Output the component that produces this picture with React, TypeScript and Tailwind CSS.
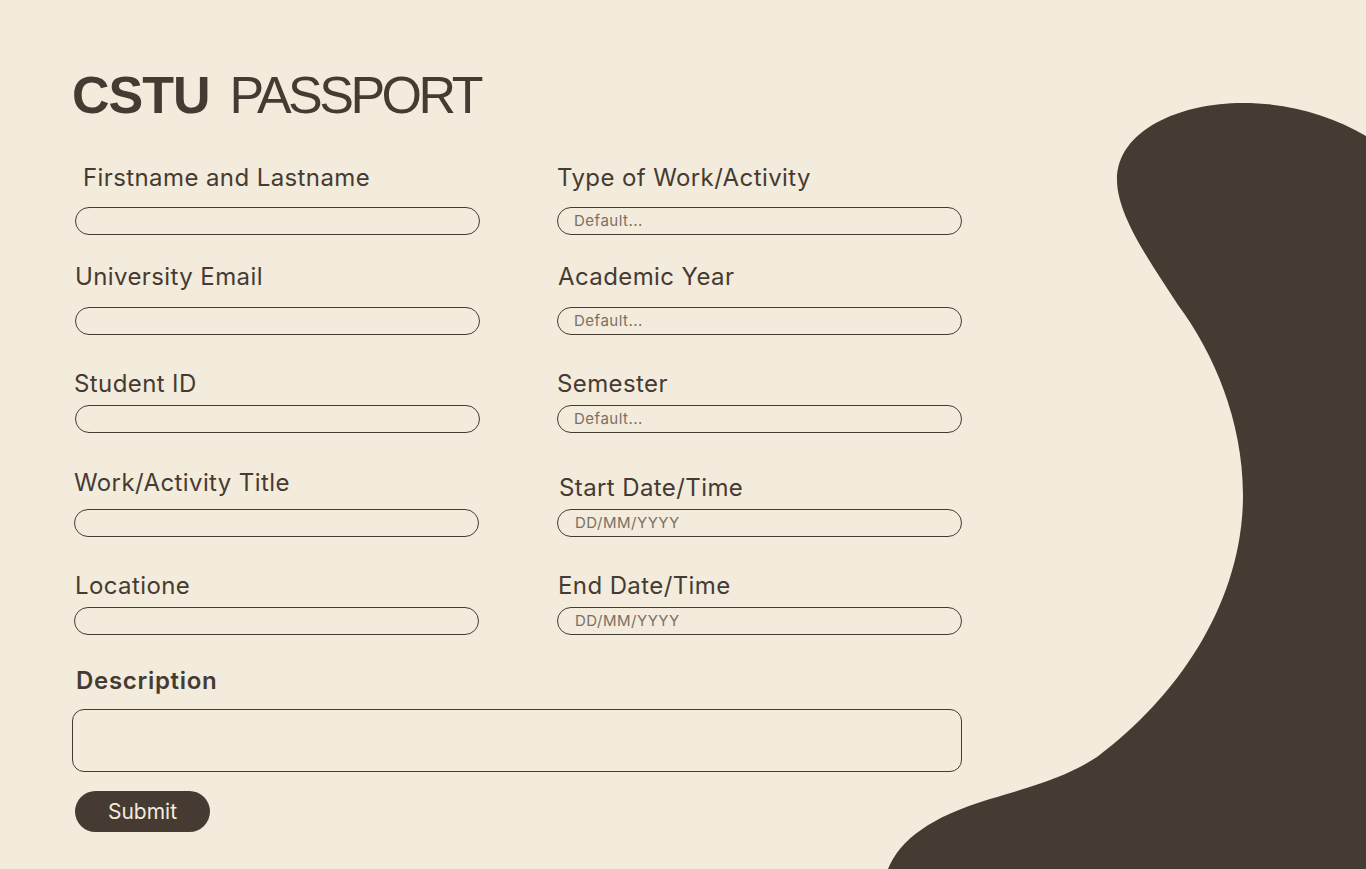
import React from "react";

const font = { fontFamily: "Inter, 'Liberation Sans', sans-serif" };

function Label({ children, className = "" }: { children: React.ReactNode; className?: string }) {
  return (
    <div className={`h-[30px] leading-[30px] text-[24px] tracking-[0.4px] text-[#463b33] whitespace-pre ${className}`}>{children}</div>
  );
}

function Input({ placeholder, className = "" }: { placeholder?: string; className?: string }) {
  return (
    <div
      className={`h-[28px] w-[405px] rounded-full border border-[#463b33] flex items-center pl-[16px] text-[15px] tracking-[0.5px] text-[#7a7067] ${className}`}
    >
      {placeholder}
    </div>
  );
}

export default function App() {
  return (
    <div className="relative w-[1366px] h-[869px] overflow-hidden bg-[#f3ebdb]" style={font}>
      <svg className="absolute inset-0" width="1366" height="869" viewBox="0 0 1366 869">
        <path
          d="M1243,103 C1180,103 1117,130 1117,180 C1117,215 1150,262 1178,305 C1213,352 1243,420 1243,495 C1243,600 1180,695 1097,757 C1068,776 1035,786 990,799 C930,817 900,840 888,869 L1366,869 L1366,136 C1330,115 1290,103 1243,103 Z"
          fill="#463b33"
        />
      </svg>

      <div className="relative pl-[72px] pt-[69px]">
        <h1
          className="flex h-[52px] leading-[52px] text-[52px] text-[#463b33] whitespace-pre"
          style={{ fontFamily: "'Liberation Sans', Arial, sans-serif" }}
        >
          <span className="font-bold tracking-[-1px]">CSTU</span>
          <span className="ml-[20px] tracking-[-3.5px]">PASSPORT</span>
        </h1>

        <div className="grid grid-cols-[405px_405px] gap-x-[77px] pl-[3px] mt-[42px]">
          {/* row 1 */}
          <div>
            <Label className="pl-[8px]">Firstname and Lastname</Label>
            <Input className="mt-[14px]" />
          </div>
          <div>
            <Label>Type of Work/Activity</Label>
            <Input className="mt-[14px]" placeholder="Default..." />
          </div>
          {/* row 2 */}
          <div className="mt-[27px]">
            <Label>University Email</Label>
            <Input className="mt-[15px]" />
          </div>
          <div className="mt-[27px]">
            <Label className="pl-[1px]">Academic Year</Label>
            <Input className="mt-[15px]" placeholder="Default..." />
          </div>
          {/* row 3 */}
          <div className="mt-[34px]">
            <Label className="-ml-[1px]">Student ID</Label>
            <Input className="mt-[6px]" />
          </div>
          <div className="mt-[34px]">
            <Label>Semester</Label>
            <Input className="mt-[6px]" placeholder="Default..." />
          </div>
          {/* row 4 */}
          <div className="mt-[35px]">
            <Label className="-ml-[1px]">Work/Activity Title</Label>
            <Input className="mt-[11px] -ml-[1px]" />
          </div>
          <div className="mt-[35px]">
            <Label className="pl-[2px] pt-[5px] h-[35px]">Start Date/Time</Label>
            <Input className="mt-[6px] pl-[17px]" placeholder="DD/MM/YYYY" />
          </div>
          {/* row 5 */}
          <div className="mt-[34px]">
            <Label>Locatione</Label>
            <Input className="mt-[6px] -ml-[1px]" />
          </div>
          <div className="mt-[34px]">
            <Label className="pl-[1px]">End Date/Time</Label>
            <Input className="mt-[6px] pl-[17px]" placeholder="DD/MM/YYYY" />
          </div>
        </div>

        <div className="mt-[31px] pl-[4px]">
          <Label className="font-semibold tracking-[0.7px]">Description</Label>
        </div>
        <div className="mt-[13px] h-[63px] w-[890px] rounded-[12px] border border-[#463b33]" />
        <button className="mt-[19px] ml-[3px] h-[41px] w-[135px] rounded-full bg-[#463b33] text-[#f3ebdb] text-[21px] flex items-center justify-center">
          Submit
        </button>
      </div>
    </div>
  );
}
